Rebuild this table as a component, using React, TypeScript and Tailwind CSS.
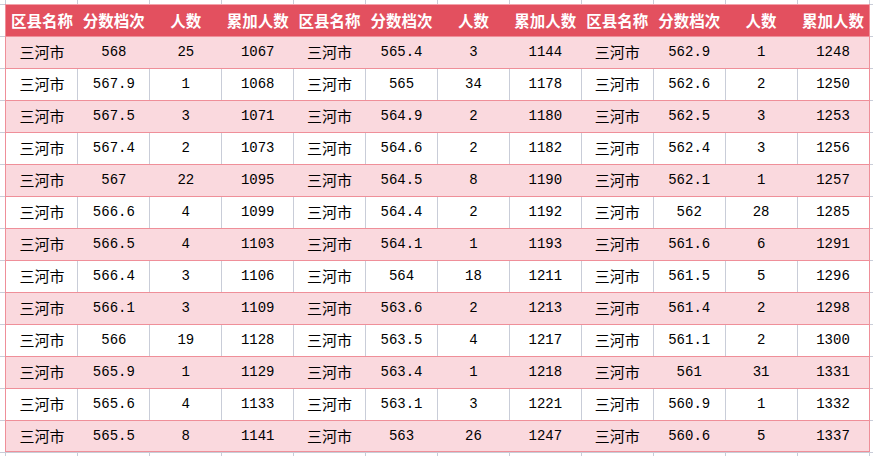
import React from 'react';

type Group = [string, string, string];

const rows: Group[][] = [
  [['568', '25', '1067'], ['565.4', '3', '1144'], ['562.9', '1', '1248']],
  [['567.9', '1', '1068'], ['565', '34', '1178'], ['562.6', '2', '1250']],
  [['567.5', '3', '1071'], ['564.9', '2', '1180'], ['562.5', '3', '1253']],
  [['567.4', '2', '1073'], ['564.6', '2', '1182'], ['562.4', '3', '1256']],
  [['567', '22', '1095'], ['564.5', '8', '1190'], ['562.1', '1', '1257']],
  [['566.6', '4', '1099'], ['564.4', '2', '1192'], ['562', '28', '1285']],
  [['566.5', '4', '1103'], ['564.1', '1', '1193'], ['561.6', '6', '1291']],
  [['566.4', '3', '1106'], ['564', '18', '1211'], ['561.5', '5', '1296']],
  [['566.1', '3', '1109'], ['563.6', '2', '1213'], ['561.4', '2', '1298']],
  [['566', '19', '1128'], ['563.5', '4', '1217'], ['561.1', '2', '1300']],
  [['565.9', '1', '1129'], ['563.4', '1', '1218'], ['561', '31', '1331']],
  [['565.6', '4', '1133'], ['563.1', '3', '1221'], ['560.9', '1', '1332']],
  [['565.5', '8', '1141'], ['563', '26', '1247'], ['560.6', '5', '1337']],
];

const headers = ['区县名称', '分数档次', '人数', '累加人数'];

const cjk = "font-['Noto_Sans_CJK_SC',sans-serif]";
const mono = "font-['Liberation_Mono','Noto_Sans_CJK_SC',monospace]";

export default function App() {
  return (
    <div className="w-[873px] h-[456px] overflow-hidden bg-white bg-[linear-gradient(to_right,#c9cdd8_1px,transparent_1px),linear-gradient(to_bottom,#c9cdd8_1px,transparent_1px)] bg-[size:72px_32px] bg-[position:5px_4px]">
      <div className="ml-[5px] mt-[4px] w-[865px] border-x border-[#ef8f99]">
        <div className="grid grid-cols-[repeat(12,1fr)] h-[32px] border-t border-[#f3a3ab] bg-[#e3505f]">
          {[0, 1, 2].flatMap(g =>
            headers.map(h => (
              <div key={g + h} className={`flex items-center justify-center text-white font-bold text-[15.5px] ${cjk}`}>
                {h}
              </div>
            ))
          )}
        </div>
        {rows.map((row, i) => (
          <div
            key={i}
            className={`grid grid-cols-[repeat(12,1fr)] h-[32px] border-t border-[#ef8f99] ${i === rows.length - 1 ? 'border-b' : ''} ${i % 2 === 0 ? 'bg-[#fad9de]' : 'bg-transparent'}`}
          >
            {row.flatMap((grp, g) => [
              <div key={g + 'n'} className={`flex items-center justify-center text-black text-[15px] ${cjk}`}>三河市</div>,
              ...grp.map((v, k) => (
                <div key={g + '-' + k} className={`flex items-center justify-center text-black text-[14px] ${mono}`}>
                  {v}
                </div>
              )),
            ])}
          </div>
        ))}
      </div>
    </div>
  );
}
